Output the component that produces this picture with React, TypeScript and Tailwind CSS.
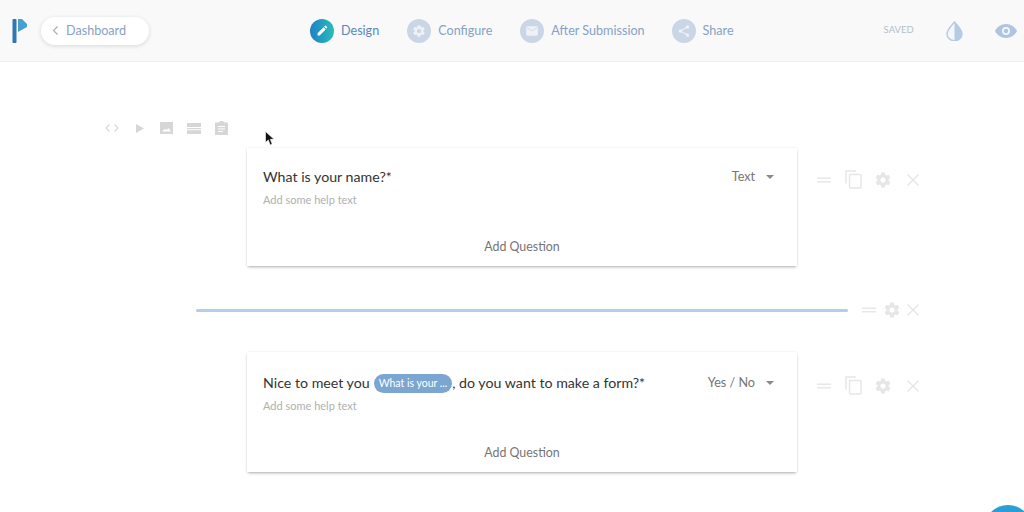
import React from "react";

const Gear = ({ className = "", size = 16 }: { className?: string; size?: number }) => (
  <svg width={size} height={size} viewBox="0 0 24 24" className={className} fill="currentColor">
    <path d="M19.43 12.98c.04-.32.07-.64.07-.98s-.03-.66-.07-.98l2.11-1.65c.19-.15.24-.42.12-.64l-2-3.46c-.12-.22-.39-.3-.61-.22l-2.49 1c-.52-.4-1.08-.73-1.69-.98l-.38-2.65C14.46 2.18 14.25 2 14 2h-4c-.25 0-.46.18-.49.42l-.38 2.65c-.61.25-1.17.59-1.69.98l-2.49-1c-.23-.09-.49 0-.61.22l-2 3.46c-.13.22-.07.49.12.64l2.11 1.65c-.04.32-.07.65-.07.98s.03.66.07.98l-2.11 1.65c-.19.15-.24.42-.12.64l2 3.46c.12.22.39.3.61.22l2.49-1c.52.4 1.08.73 1.69.98l.38 2.65c.03.24.24.42.49.42h4c.25 0 .46-.18.49-.42l.38-2.65c.61-.25 1.17-.59 1.69-.98l2.49 1c.23.09.49 0 .61-.22l2-3.46c.12-.22.07-.49-.12-.64l-2.11-1.65zM12 15.5c-1.93 0-3.5-1.57-3.5-3.5s1.57-3.5 3.5-3.5 3.5 1.57 3.5 3.5-1.57 3.5-3.5 3.5z" />
  </svg>
);

const Equals = () => (
  <svg width="14" height="6" viewBox="0 0 14 6" className="text-[#e8e8e8]" fill="currentColor">
    <rect width="14" height="1.5" y="0.5" />
    <rect width="14" height="1.5" y="4" />
  </svg>
);

const Cross = () => (
  <svg width="12" height="12" viewBox="0 0 12 12" className="text-[#e4e4e4]" fill="none" stroke="currentColor" strokeWidth="1.2">
    <path d="M.5.5l11 11M11.5.5l-11 11" />
  </svg>
);

const Copy = () => (
  <svg width="17" height="19" viewBox="0 0 17 19" className="text-[#e6e6e6]" fill="none" stroke="currentColor" strokeWidth="1.4">
    <path d="M1 13.5V1h10" />
    <rect x="4.5" y="4.5" width="11.5" height="13.5" rx="1" />
  </svg>
);

const Step = ({ label, active, icon }: { label: string; active?: boolean; icon: React.ReactNode }) => (
  <div className="flex items-center gap-[7px]">
    <div
      className={
        active
          ? "w-6 h-6 rounded-full flex items-center justify-center bg-gradient-to-r from-[#1f82c6] to-[#2cbcb8]"
          : "w-6 h-6 rounded-full flex items-center justify-center bg-[#cad6e5]"
      }
    >
      {icon}
    </div>
    <span className={active ? "text-[12.6px] pt-[2px] text-[#5b87b3]" : "text-[12.6px] pt-[2px] text-[#86a2c4]"}>{label}</span>
  </div>
);

const Question = ({ type, tall, children }: { type: string; tall?: boolean; children: React.ReactNode }) => (
  <div className="flex ml-[247px]">
    <div className="w-[550px] bg-white shadow-[0_2px_3px_-1px_rgba(0,0,0,0.3),0_0_2px_rgba(0,0,0,0.1)] pl-4 pr-[23px] flex flex-col">
      <div className={tall ? "flex justify-between items-center mt-[21px]" : "flex justify-between items-center mt-[19px]"}>
        <div className="text-[14.2px] leading-[20px] text-[#333333] flex items-center">{children}</div>
        <div className="flex items-center gap-[11px] text-[12.6px] text-[#757575] pt-[1px]">
          <span>{type}</span>
          <svg width="8" height="4" viewBox="0 0 8 4" className="text-[#8a8a8a]" fill="currentColor">
            <path d="M0 0h8L4 4z" />
          </svg>
        </div>
      </div>
      <div className="text-[11px] leading-4 text-[#b0b0b0] mt-[5px]">Add some help text</div>
      <div className="text-[12.4px] leading-4 text-[#757575] text-center mt-[31px] mb-[11px] mr-[-7px]">Add Question</div>
    </div>
    <div className={tall ? "flex items-center h-[17px] ml-[20px] mt-[25px]" : "flex items-center h-[17px] ml-[20px] mt-[23px]"}>
      <Equals />
      <div className="ml-[14px] flex">
        <Copy />
      </div>
      <div className="ml-[12px] flex">
        <Gear size={18} className="text-[#e6e6e6]" />
      </div>
      <div className="ml-[15px] flex">
        <Cross />
      </div>
    </div>
  </div>
);

export default function App() {
  return (
    <div className="relative w-[1024px] h-[512px] overflow-hidden bg-white font-['Lato',sans-serif]">
      <header className="h-[62px] bg-[#f9f9fa] border-b border-[#eeeeee] flex items-center">
        <svg width="16" height="26" viewBox="0 0 16 26" className="ml-3" aria-hidden>
          <rect x="0.5" y="1" width="4" height="24" rx="1" fill="#2f76b4" />
          <path d="M6 1h4l5 5v3l-9 5z" fill="#4a9fd2" />
        </svg>
        <div className="ml-[13px] w-[108px] h-[28px] bg-white rounded-full shadow-[0_1px_4px_rgba(0,0,0,0.14)] flex items-center pl-3 gap-[8px]">
          <svg width="5" height="9" viewBox="0 0 5 9" fill="none" stroke="#a9a9a9" strokeWidth="1.1">
            <path d="M4.5.5l-4 4 4 4" />
          </svg>
          <span className="text-[12.6px] pt-[2px] text-[#86a2c4]">Dashboard</span>
        </div>
        <nav className="flex items-center ml-[161px]">
          <Step
            active
            label="Design"
            icon={
              <svg width="13" height="13" viewBox="0 0 24 24" fill="white">
                <path d="M3 17.25V21h3.75L17.81 9.94l-3.75-3.75L3 17.25zM20.71 7.04a1 1 0 0 0 0-1.41l-2.34-2.34a1 1 0 0 0-1.41 0l-1.83 1.83 3.75 3.75 1.83-1.83z" />
              </svg>
            }
          />
          <div className="ml-[28px]">
            <Step label="Configure" icon={<Gear size={14} className="text-[#eef2f7]" />} />
          </div>
          <div className="ml-[28px]">
            <Step
              label="After Submission"
              icon={
                <svg width="14" height="14" viewBox="0 0 24 24" fill="#eef2f7">
                  <rect x="2" y="4" width="20" height="16" rx="2" />
                  <path d="M3 6l9 6 9-6" fill="none" stroke="#cad6e5" strokeWidth="1.5" />
                </svg>
              }
            />
          </div>
          <div className="ml-[27px]">
            <Step
              label="Share"
              icon={
                <svg width="14" height="14" viewBox="0 0 24 24" fill="#eef2f7">
                  <path d="M18 16.08c-.76 0-1.44.3-1.96.77L8.91 12.7c.05-.23.09-.46.09-.7s-.04-.47-.09-.7l7.05-4.11c.54.5 1.25.81 2.04.81 1.66 0 3-1.34 3-3s-1.34-3-3-3-3 1.34-3 3c0 .24.04.47.09.7L8.04 9.81C7.5 9.31 6.79 9 6 9c-1.66 0-3 1.34-3 3s1.34 3 3 3c.79 0 1.5-.31 2.04-.81l7.12 4.16c-.05.21-.08.43-.08.65 0 1.61 1.31 2.92 2.92 2.92s2.92-1.31 2.92-2.92-1.31-2.92-2.92-2.92z" />
                </svg>
              }
            />
          </div>
        </nav>
        <span className="text-[9.5px] text-[#b4bfcc] ml-[150px]">SAVED</span>
        <svg width="17" height="20" viewBox="0 0 17 20" className="ml-[32px]">
          <path d="M8.5 1C5 5 1 8.5 1 13a7.5 6.8 0 0 0 15 0C16 8.5 12 5 8.5 1z" fill="#f4f6f9" stroke="#b5cbe3" strokeWidth="1.4" />
          <path d="M8.5 1C12 5 16 8.5 16 13a7.5 6.8 0 0 1-7.5 6.5z" fill="#b5cbe3" />
        </svg>
        <svg width="22" height="14" viewBox="0 0 22 14" className="ml-[32px]">
          <path d="M11 0C6 0 2 3 0 7c2 4 6 7 11 7s9-3 11-7c-2-4-6-7-11-7z" fill="#adc5df" />
          <circle cx="11" cy="7" r="4" fill="#f4f6f9" />
          <circle cx="11" cy="7" r="2.2" fill="#adc5df" />
        </svg>
      </header>

      <main className="flex flex-col">
        <div className="flex items-center ml-[105px] mt-[59px] h-[14px] text-[#d6d6d6]">
          <svg width="14" height="8" viewBox="0 0 14 8" fill="none" stroke="currentColor" strokeWidth="1.1">
            <path d="M4.5.5L1 4l3.5 3.5M9.5.5L13 4 9.5 7.5" />
          </svg>
          <svg width="8" height="9" viewBox="0 0 8 9" fill="currentColor" className="ml-[17px]">
            <path d="M0 0l8 4.5L0 9z" />
          </svg>
          <svg width="13" height="12" viewBox="0 0 13 12" fill="currentColor" className="ml-[16px]">
            <path fillRule="evenodd" d="M0 0h13v12H0zM2 9.5h9L8.5 6 6.5 8 5 6.8z" />
          </svg>
          <svg width="14" height="11" viewBox="0 0 14 11" fill="currentColor" className="ml-[14px]">
            <rect width="14" height="4" />
            <rect y="5" width="14" height="1.2" />
            <rect y="7.2" width="14" height="3.8" />
          </svg>
          <svg width="13" height="14" viewBox="0 0 13 14" fill="currentColor" className="ml-[14px]">
            <path fillRule="evenodd" d="M0 1.5h3.5C4 .5 5 0 6.5 0S9 .5 9.5 1.5H13V14H0zM3 5v1h7V5zM3 7.5v1h7v-1zM3 10v1h5v-1z" />
          </svg>
        </div>

        <div className="mt-[13px]">
          <Question type="Text">What is your name?*</Question>
        </div>

        <div className="flex items-center ml-[196px] mt-[38px] h-[12px]">
          <div className="w-[652px] h-[3px] rounded-full bg-[#b4cde8]" />
          <div className="flex items-center ml-[14px]">
            <Equals />
            <div className="ml-[7px] flex">
              <Gear size={18} className="text-[#e6e6e6]" />
            </div>
            <div className="ml-[6px] flex">
              <Cross />
            </div>
          </div>
        </div>

        <div className="mt-[36px]">
          <Question type="Yes / No" tall>
            <span>Nice to meet you</span>
            <span className="ml-[4px] h-[19px] px-[5px] rounded-full bg-[#7ba6d1] text-white text-[10.5px] flex items-center">
              What is your ...
            </span>
            <span>, do you want to make a form?*</span>
          </Question>
        </div>
      </main>

      <svg width="11" height="15" viewBox="0 0 11 15" className="absolute left-[265px] top-[131px]">
        <path d="M0.5 0.5v11l2.8-2.6L5.2 14l2-.9-1.9-4.8H9z" fill="#111" stroke="#fff" strokeWidth="0.6" />
      </svg>
      <div className="absolute left-[984px] top-[505px] w-[48px] h-[48px] rounded-full bg-[#2a9fd6]" />
    </div>
  );
}
